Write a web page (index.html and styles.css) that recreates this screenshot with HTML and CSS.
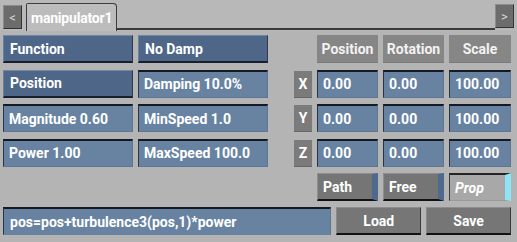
FILE: index.html
```html
<!DOCTYPE html>
<html lang="en">
<head>
    <meta charset="UTF-8">
    <title>manipulator1</title>
    <link rel="stylesheet" href="styles.css">
</head>
<body>
    <div class="tab-bar">
        <div class="nav-btn">&lt;</div>
        <div class="tab">manipulator1</div>
        <div class="tab-line"></div>
        <div class="nav-btn right">&gt;</div>
    </div>

    <div class="panel">
        <div class="grid">
            <!-- row 1 -->
            <div class="btn dark">Function</div>
            <div class="btn dark">No Damp</div>
            <div></div>
            <div></div>
            <div class="head">Position</div>
            <div class="head">Rotation</div>
            <div class="head">Scale</div>

            <!-- row 2 -->
            <div class="btn dark">Position</div>
            <div class="field">Damping 10.0%</div>
            <div></div>
            <div class="axis">X</div>
            <div class="field">0.00</div>
            <div class="field">0.00</div>
            <div class="field">100.00</div>

            <!-- row 3 -->
            <div class="field">Magnitude 0.60</div>
            <div class="field">MinSpeed 1.0</div>
            <div></div>
            <div class="axis">Y</div>
            <div class="field">0.00</div>
            <div class="field">0.00</div>
            <div class="field">100.00</div>

            <!-- row 4 -->
            <div class="field">Power 1.00</div>
            <div class="field">MaxSpeed 100.0</div>
            <div></div>
            <div class="axis">Z</div>
            <div class="field">0.00</div>
            <div class="field">0.00</div>
            <div class="field">100.00</div>

            <!-- row 5 -->
            <div class="toggle path">Path</div>
            <div class="toggle">Free</div>
            <div class="toggle on">Prop</div>
        </div>

        <div class="bottom-row">
            <div class="field expr">pos=pos+turbulence3(pos,1)*power</div>
            <div class="btn gray">Load</div>
            <div class="btn gray">Save</div>
        </div>
    </div>
</body>
</html>
```

FILE: styles.css
```css
/* Base */
body {
    margin: 0;
    background-color: #b4b4b4;
    font-family: Roboto, "Liberation Sans", sans-serif;
    font-weight: 700;
    font-size: 14px;
    color: #fff;
    width: 517px;
    height: 242px;
    overflow: hidden;
}

/* Tab bar */
.tab-bar {
    display: flex;
    align-items: flex-end;
    height: 31px;
    padding: 0 3px 0 3px;
    background-color: #b8b8b8;
    box-sizing: border-box;
}

.nav-btn {
    width: 19px;
    height: 24px;
    margin-bottom: 2px;
    background-color: #6c6c6c;
    border-top: 1px solid #8c8c8c;
    border-left: 1px solid #8c8c8c;
    border-bottom: 1px solid #333;
    border-right: 1px solid #333;
    box-sizing: border-box;
    color: #d8d8d8;
    font-weight: 400;
    font-size: 13px;
    display: flex;
    align-items: center;
    justify-content: center;
}

.nav-btn.right {
    margin-bottom: 3px;
}

.tab {
    height: 28px;
    margin-left: 4px;
    padding: 0 4px;
    width: 91px;
    box-sizing: border-box;
    background-color: #bcbcbc;
    border: 1px solid #3c3c3c;
    border-bottom: none;
    border-radius: 2px 4px 0 0;
    display: flex;
    align-items: center;
    font-size: 14px;
    letter-spacing: -0.2px;
}

.tab-line {
    flex: 1;
    align-self: stretch;
    border-bottom: 2px solid #3a3a3a;
    margin-bottom: 1px;
}

/* Main panel */
.panel {
    padding: 4px 6px 0 3px;
}

.grid {
    display: grid;
    grid-template-columns: 130px 130px 16px 18px 61px 61px 62px;
    grid-template-rows: repeat(5, 28px);
    column-gap: 5px;
    row-gap: 6.5px;
}

.btn,
.field,
.head {
    display: flex;
    align-items: center;
    box-sizing: border-box;
    white-space: nowrap;
}

.btn {
    padding-left: 6px;
}

.btn.dark {
    background-color: #4e6687;
    border-top: 1px solid #7088a6;
    border-left: 1px solid #6a82a0;
    border-bottom: 2px solid #18202e;
    border-right: 1px solid #2c3a4e;
}

.field {
    padding-left: 5px;
    background-color: #6883a1;
    border-top: 2px solid #141a22;
    border-left: 1px solid #2a3442;
    border-bottom: 1px solid #5e7692;
    border-right: 1px solid #5e7692;
}

.head {
    justify-content: center;
    background-color: #868686;
    color: #f2f2f2;
    border-bottom: 1px solid #7a7a7a;
}

.axis {
    display: flex;
    align-items: center;
    justify-content: center;
    background-color: #7b7b7b;
    border-bottom: 1px solid #666;
    margin-top: 1px;
}

/* Path / Free / Prop toggles */
.toggle {
    box-sizing: border-box;
    display: flex;
    align-items: center;
    padding-left: 5px;
    background-color: #757575;
    border-top: 1px solid #8e8e8e;
    border-left: 1px solid #8e8e8e;
    border-bottom: 2px solid #121212;
    border-right: 6px solid #4f6a8c;
}

.toggle.path {
    grid-column: 5;
}

.toggle.on {
    background-color: #a8a8a8;
    border-top: 2px solid #242424;
    border-left: 1px solid #3a3a3a;
    border-bottom: 1px solid #9a9a9a;
    border-right: 6px solid #8fe5f6;
    font-style: italic;
}

/* Bottom row */
.bottom-row {
    display: flex;
    gap: 5px;
    margin-top: 6px;
    height: 28px;
}

.expr {
    width: 329px;
    padding-left: 6px;
    border-bottom-color: #6883a1;
}

.btn.gray {
    width: 85px;
    padding-left: 0;
    justify-content: center;
    background-color: #767676;
    border-top: 1px solid #8e8e8e;
    border-left: 1px solid #8a8a8a;
    border-bottom: 2px solid #121212;
    border-right: 1px solid #3a3a3a;
}
```
